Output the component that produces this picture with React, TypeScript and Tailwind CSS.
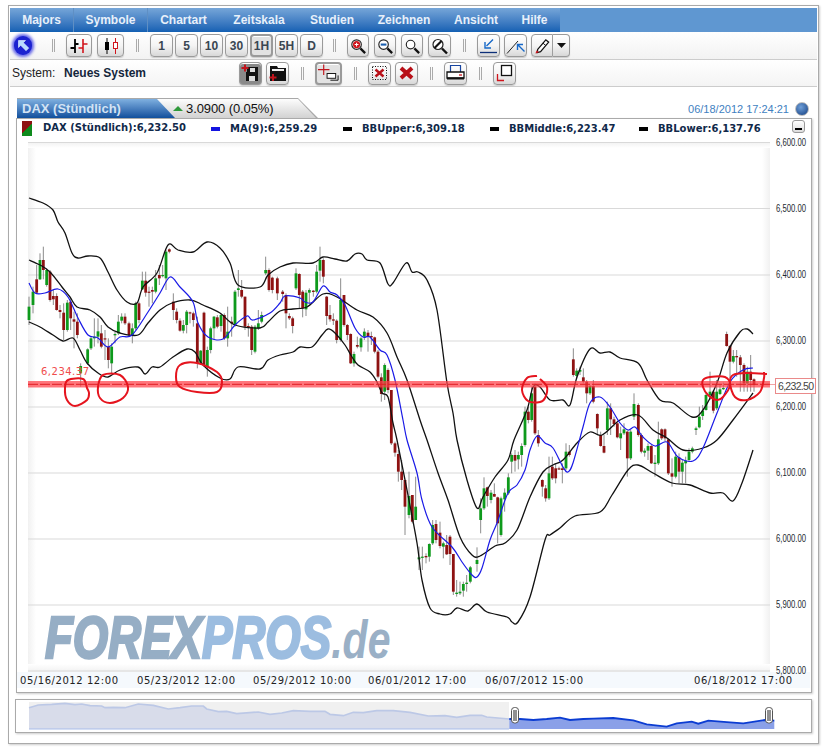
import type { ReactNode } from "react";

const G = 1;
const R = 0;
// [x, wickTop, wickBottom, bodyTop, bodyBottom, colour] measured on 3x crops
type Row = number[];

const section = (ox: number, oy: number, rows: Row[]) =>
  rows.map(([x, wt, wb, bt, bb, c]) => ({
    x: ox + x / 3,
    wt: oy + wt / 3,
    wb: oy + wb / 3,
    bt: oy + bt / 3,
    bb: oy + bb / 3,
    c,
  }));

const pts = (ox: number, oy: number, list: number[][]) => list.map(([x, y]) => [ox + x / 3, oy + y / 3]);

const candles = [
  ...section(20, 190, [
    [27, 320, 405, 350, 390, G], [39, 290, 370, 305, 345, G], [50, 225, 310, 268, 308, R], [60, 190, 270, 210, 268, G],
    [70, 170, 268, 210, 240, R], [80, 235, 290, 240, 285, G], [90, 240, 335, 245, 330, R], [100, 300, 345, 318, 328, R],
    [110, 310, 362, 318, 360, R], [120, 345, 385, 360, 366, R], [131, 340, 450, 368, 420, R], [142, 330, 425, 338, 420, G],
    [152, 325, 420, 335, 385, R], [162, 365, 475, 388, 395, R], [172, 370, 445, 395, 435, R], [182, 520, 590, 528, 550, G],
    [203, 475, 525, 478, 520, G], [213, 440, 480, 445, 475, G], [223, 385, 470, 440, 445, G], [234, 385, 460, 424, 440, G],
    [244, 405, 475, 430, 470, R], [255, 420, 510, 445, 448, R], [265, 445, 535, 470, 510, R], [275, 460, 550, 470, 520, G],
    [285, 425, 460, 432, 436, G], [295, 375, 435, 395, 430, G], [305, 370, 400, 380, 392, G], [315, 370, 405, 380, 400, R],
    [327, 395, 440, 400, 435, R], [337, 400, 460, 415, 435, G], [347, 335, 420, 340, 415, G], [357, 335, 400, 340, 390, R],
    [367, 245, 300, 272, 298, G], [377, 245, 320, 272, 308, R], [387, 290, 350, 305, 308, R], [397, 290, 340, 300, 305, R],
    [407, 240, 310, 265, 305, G], [418, 225, 285, 255, 265, R], [428, 225, 262, 255, 258, G], [438, 180, 300, 185, 265, G],
    [448, 175, 190, 178, 185, R], [460, 310, 390, 335, 360, R], [470, 355, 400, 365, 390, R], [480, 385, 425, 392, 422, R],
    [490, 390, 430, 405, 422, G], [500, 360, 430, 365, 405, G], [510, 365, 400, 367, 370, R], [520, 365, 410, 370, 390, R],
    [532, 380, 535, 400, 520, R], [542, 480, 525, 482, 520, G], [552, 365, 530, 368, 525, R], [562, 470, 560, 480, 530, G],
    [572, 410, 490, 415, 480, G], [582, 378, 450, 380, 415, G], [592, 375, 415, 382, 410, R], [603, 370, 425, 375, 408, G],
    [613, 370, 450, 375, 445, R], [623, 350, 470, 425, 445, G], [635, 380, 440, 395, 400, R], [645, 300, 410, 305, 405, G],
    [655, 240, 320, 295, 300, G], [665, 270, 325, 300, 320, R], [675, 320, 420, 320, 410, R], [685, 400, 440, 408, 412, R],
    [695, 405, 495, 410, 480, R], [705, 405, 490, 410, 485, G], [715, 360, 420, 400, 415, G], [725, 365, 400, 375, 395, G],
    [737, 200, 255, 240, 250, G], [747, 235, 305, 240, 300, R], [757, 260, 310, 263, 300, R], [772, 260, 330, 265, 310, R],
  ]),
  ...section(280, 230, [
    [8, 180, 215, 185, 192, R], [18, 190, 295, 195, 250, R], [28, 250, 270, 258, 265, R], [38, 260, 310, 265, 288, R],
    [48, 115, 180, 130, 175, G], [58, 130, 235, 132, 195, R], [68, 180, 262, 185, 235, R], [78, 180, 258, 188, 238, G],
    [88, 175, 220, 180, 188, G], [100, 180, 200, 182, 186, R], [110, 105, 190, 125, 185, G], [120, 50, 155, 90, 122, G],
    [130, 85, 160, 90, 140, R], [140, 198, 285, 200, 258, R], [150, 225, 275, 255, 268, R], [160, 250, 285, 268, 272, R],
    [170, 268, 340, 272, 330, R], [182, 145, 335, 210, 330, G], [192, 195, 290, 195, 285, R], [202, 282, 330, 285, 315, R],
    [212, 310, 402, 312, 400, R], [222, 365, 410, 372, 400, G], [232, 320, 355, 345, 350, R], [243, 320, 365, 325, 352, G],
    [253, 295, 330, 305, 320, G], [264, 300, 365, 308, 320, R], [274, 305, 345, 318, 322, R], [284, 320, 370, 322, 365, R],
    [294, 360, 445, 365, 440, R], [304, 430, 515, 442, 492, R], [314, 400, 510, 405, 485, G], [324, 415, 490, 420, 480, R],
    [334, 480, 645, 480, 640, R], [345, 635, 680, 640, 668, R],
    [735, 530, 650, 545, 645, G], [745, 530, 580, 545, 570, R], [755, 470, 575, 490, 570, G], [765, 460, 615, 470, 610, R], [775, 600, 650, 615, 640, R],
  ]),
  ...section(380, 440, [
    [55, 30, 125, 42, 95, R], [65, 60, 150, 95, 120, R], [75, 120, 285, 120, 200, R], [87, 95, 235, 168, 225, G],
    [97, 165, 250, 165, 245, R], [107, 110, 240, 200, 240, G], [117, 320, 390, 352, 358, G], [127, 320, 390, 350, 352, G],
    [138, 340, 370, 348, 352, R], [148, 310, 365, 312, 350, G], [158, 240, 315, 255, 310, G], [168, 240, 310, 252, 300, R],
    [180, 245, 325, 278, 318, R], [190, 305, 355, 310, 320, G], [200, 285, 345, 315, 343, R], [210, 285, 375, 290, 342, R],
    [220, 342, 465, 342, 455, R], [230, 420, 470, 458, 462, G], [240, 425, 465, 455, 460, G], [250, 425, 470, 432, 452, G],
    [260, 405, 455, 428, 432, G], [271, 378, 430, 382, 425, G], [291, 322, 395, 360, 372, G], [302, 175, 280, 205, 240, G],
    [312, 112, 210, 145, 205, G], [322, 140, 200, 142, 168, R], [333, 150, 190, 158, 180, G], [343, 130, 170, 162, 170, R],
    [353, 170, 310, 172, 250, R], [363, 170, 290, 175, 285, G], [374, 145, 215, 158, 178, G], [385, 100, 165, 112, 160, G],
    [395, 40, 100, 45, 65, G], [405, 30, 95, 45, 62, R], [415, 35, 88, 45, 58, G], [425, 10, 80, 18, 45, G],
  ]),
  ...section(540, 320, [
    [7, 478, 530, 480, 500, R], [17, 495, 545, 505, 535, R], [27, 410, 540, 460, 535, G], [37, 410, 480, 440, 475, R],
    [47, 430, 490, 445, 475, R], [57, 440, 450, 445, 447, R], [67, 430, 490, 445, 450, R], [78, 370, 450, 395, 445, G],
    [88, 375, 410, 395, 405, R], [100, 85, 170, 118, 165, R], [110, 145, 175, 152, 168, G], [120, 140, 165, 150, 155, G],
    [130, 145, 190, 172, 185, R], [140, 180, 250, 185, 220, R], [150, 195, 225, 198, 220, G], [160, 180, 250, 198, 245, R],
    [172, 280, 345, 282, 325, R], [182, 335, 380, 345, 378, R], [192, 345, 400, 378, 398, R], [202, 245, 345, 265, 330, G],
    [212, 250, 345, 265, 298, R], [222, 290, 320, 298, 312, R], [232, 308, 355, 310, 352, R], [242, 320, 390, 340, 355, G],
    [252, 310, 345, 328, 340, G], [262, 332, 470, 335, 415, R], [272, 330, 420, 335, 415, G], [282, 220, 300, 252, 290, G],
    [295, 250, 350, 255, 345, R], [304, 340, 400, 345, 395, R], [314, 385, 410, 392, 398, G], [324, 370, 420, 378, 392, G],
    [334, 375, 432, 378, 430, R], [345, 405, 470, 428, 432, G], [355, 305, 435, 358, 430, G], [365, 325, 360, 328, 355, R],
    [375, 325, 365, 328, 355, R], [385, 355, 465, 358, 460, R], [396, 415, 500, 460, 470, R], [407, 395, 475, 410, 470, G],
    [417, 400, 490, 412, 455, R], [427, 420, 490, 428, 455, G], [437, 410, 490, 422, 430, G], [447, 385, 425, 395, 420, G],
    [457, 380, 400, 385, 395, G], [468, 320, 345, 325, 330, G], [478, 260, 325, 290, 322, G], [488, 255, 300, 272, 288, G],
    [498, 220, 272, 225, 270, G], [510, 155, 240, 215, 225, G], [520, 210, 280, 215, 272, R], [530, 180, 270, 215, 265, G],
    [540, 195, 225, 208, 222, G], [550, 188, 210, 204, 206, G], [560, 35, 80, 42, 78, R], [570, 75, 175, 78, 125, R],
    [580, 90, 130, 108, 125, G], [590, 90, 170, 108, 112, R], [601, 105, 215, 112, 135, R], [612, 130, 215, 135, 190, R],
    [622, 140, 215, 155, 190, G], [632, 105, 215, 155, 180, R], [642, 175, 215, 178, 195, R],
  ]),
];

const upper = [
  [29, 198], [43, 203], [53, 210], [58, 222], [65, 233], [72, 253], [78, 258], [88, 256], [100, 258], [108, 272], [117, 290], [127, 302],
  [137, 303], [143, 287], [157, 273], [168, 245], [178, 250], [193, 252], [207, 242], [220, 248], [230, 263], [238, 285], [260, 287], [268, 275],
  [280, 267], [293, 263], [313, 263], [323, 257], [335, 259], [347, 261], [355, 254], [362, 254], [367, 260], [380, 263], [388, 284], [393, 283],
  [406, 263], [412, 272], [418, 272], [427, 280], [437, 310], [447, 383], [453, 413], [457, 440], [467, 480], [477, 508], [483, 497], [495, 477],
  [508, 460], [514, 440], [527, 410], [533, 387], [540, 387], [550, 400], [563, 400], [570, 405], [577, 377], [590, 349], [600, 353], [610, 352],
  [620, 358], [638, 363], [647, 380], [660, 400], [673, 403], [692, 417], [703, 410], [717, 383], [727, 353], [740, 332], [747, 329], [753, 334],
];
const middle = [
  [29, 260], [40, 265], [50, 272], [62, 287], [70, 297], [77, 307], [90, 310], [100, 317], [108, 327], [120, 333], [138, 335], [148, 323],
  [160, 310], [172, 303], [190, 300], [203, 305], [220, 313], [235, 325], [260, 328], [268, 322], [280, 311], [293, 309], [307, 307], [323, 294],
  [337, 297], [357, 310], [373, 317], [387, 333], [397, 357], [407, 380], [420, 420], [427, 440], [438, 473], [448, 500], [460, 537], [472, 555],
  [480, 556], [495, 546], [505, 543], [517, 530], [530, 497], [543, 472], [553, 465], [563, 460], [577, 443], [590, 432], [602, 435], [620, 420],
  [638, 415], [653, 430], [667, 438], [683, 450], [703, 448], [717, 440], [733, 420], [753, 393],
];
const lower = [
  [29, 322], [40, 327], [53, 335], [63, 341], [73, 338], [80, 350], [87, 363], [98, 373], [108, 377], [120, 370], [138, 367], [145, 374],
  [152, 367], [160, 367], [173, 357], [187, 349], [195, 352], [203, 365], [220, 378], [230, 379], [238, 367], [260, 369], [268, 360], [280, 355],
  [293, 352], [300, 347], [312, 347], [322, 335], [328, 329], [335, 333], [345, 345], [352, 357], [358, 365], [370, 372], [377, 382], [382, 393],
  [388, 397], [393, 423], [397, 440], [407, 490], [417, 543], [422, 580], [430, 608], [440, 614], [450, 614], [457, 608], [468, 611], [477, 604],
  [487, 612], [507, 617], [512, 622], [518, 622], [530, 597], [545, 540], [550, 535], [560, 528], [575, 516], [600, 512], [612, 495], [628, 470],
  [638, 465], [653, 473], [672, 483], [690, 485], [710, 493], [723, 493], [733, 501], [742, 483], [753, 450],
];
const ma = [
  [29, 283], [35, 293], [45, 293], [58, 289], [68, 297], [78, 318], [88, 335], [98, 338], [108, 347], [120, 337], [132, 335], [148, 312],
  [160, 293], [170, 277], [180, 287], [193, 302], [198, 323], [208, 337], [223, 339], [235, 325], [247, 316], [253, 320], [270, 313], [280, 303],
  [285, 296], [300, 298], [305, 302], [313, 302], [323, 286], [330, 292], [337, 295], [345, 305], [355, 328], [363, 337], [370, 337], [380, 350],
  [387, 355], [395, 380], [403, 420], [407, 440], [417, 473], [422, 500], [432, 527], [452, 547], [462, 562], [472, 575], [477, 577], [482, 568],
  [490, 540], [497, 523], [508, 493], [517, 485], [525, 470], [530, 450], [537, 436], [545, 443], [553, 448], [563, 467], [568, 472], [573, 463],
  [583, 427], [590, 403], [600, 397], [610, 407], [620, 423], [628, 430], [635, 427], [643, 437], [655, 446], [667, 442], [678, 457], [693, 461],
  [703, 448], [717, 413], [730, 382], [743, 370], [753, 368],
];

const circles = [
  { d: [[68, 380], [83, 379], [87, 388], [89, 393], [87, 400], [75, 406], [67, 400], [65, 388]], closed: true },
  { d: [[103, 375], [120, 375], [128, 387], [123, 398], [110, 403], [100, 398], [98, 387]], closed: true },
  { d: [[180, 365], [197, 363], [217, 372], [222, 382], [217, 392], [197, 392], [180, 387], [176, 377]], closed: true },
  { d: [[537, 376], [527, 378], [522, 390], [528, 401], [540, 402], [545, 398], [547, 387], [540, 379]], closed: false },
  { d: [[703, 380], [710, 377], [725, 377], [730, 385], [723, 397], [717, 400], [708, 395], [703, 387]], closed: true },
  { d: [[767, 374], [747, 373], [733, 375], [730, 383], [735, 397], [747, 400], [760, 392], [764, 378], [764, 372]], closed: false },
];

const sparkLeft = [
  ...pts(10, 670, [
    [57, 113], [85, 105], [125, 103], [165, 100], [195, 104], [215, 102], [240, 107], [275, 108], [285, 113], [310, 112], [345, 113], [385, 102],
    [430, 106], [475, 117], [510, 113], [545, 108], [580, 108], [590, 117], [625, 125], [650, 124], [680, 131], [745, 126], [780, 133], [815, 129],
    [850, 122], [900, 124], [945, 124], [960, 133], [1000, 137], [1030, 127], [1060, 128], [1100, 122], [1150, 122], [1200, 127],
  ]),
  ...pts(420, 670, [[25, 138], [75, 137], [110, 142], [150, 136], [185, 136], [200, 141], [268, 147]]),
];
const sparkRight = pts(420, 670, [
  [268, 147], [300, 147], [340, 150], [380, 147], [420, 143], [450, 150], [490, 147], [520, 146], [580, 144], [640, 151], [680, 163], [740, 170], [770, 160],
  [815, 155], [835, 161], [865, 152], [930, 157], [970, 160], [1035, 150], [1063, 152],
]);

function smooth(p: number[][], closed = false) {
  const at = (i: number) => (closed ? p[(i + p.length) % p.length] : p[Math.max(0, Math.min(p.length - 1, i))]);
  let d = `M${p[0][0]} ${p[0][1]}`;
  const n = closed ? p.length : p.length - 1;
  for (let i = 0; i < n; i++) {
    const [a, b, c, e] = [at(i - 1), at(i), at(i + 1), at(i + 2)];
    d += `C${(b[0] + (c[0] - a[0]) / 6).toFixed(1)} ${(b[1] + (c[1] - a[1]) / 6).toFixed(1)} ${(c[0] - (e[0] - b[0]) / 6).toFixed(1)} ${(c[1] - (e[1] - b[1]) / 6).toFixed(1)} ${c[0]} ${c[1]}`;
  }
  return d;
}

const line = (p: number[][]) => "M" + p.map(([x, y]) => `${x.toFixed(1)} ${y.toFixed(1)}`).join("L");
const area = (p: number[][], base: number) =>
  `${line(p)}L${p[p.length - 1][0].toFixed(1)} ${base}L${p[0][0].toFixed(1)} ${base}Z`;

const menus: [string, number][] = [
  ["Majors", 64], ["Symbole", 74], ["Chartart", 71], ["Zeitskala", 80], ["Studien", 66], ["Zeichnen", 78], ["Ansicht", 66], ["Hilfe", 51],
];
const grid = [
  [142.5, "6,600.00"], [208.5, "6,500.00"], [275, "6,400.00"], [341, "6,300.00"], [407, "6,200.00"], [473, "6,100.00"], [539, "6,000.00"], [605, "5,900.00"], [671, "5,800.00"],
] as [number, string][];
const dates: [number, string][] = [
  [20, "05/16/2012 12:00"], [137, "05/23/2012 12:00"], [253, "05/29/2012 10:00"], [368, "06/01/2012 17:00"], [485, "06/07/2012 15:00"], [694, "06/18/2012 17:00"],
];

const btnBase = "flex h-[23px] shrink-0 items-center justify-center rounded-[4px] border border-[#9a9a9a] shadow-[inset_0_1px_0_#fff,0_1px_1px_#ccc]";

function Btn({ w = "w-[23px]", pressed, dark, children }: { w?: string; pressed?: boolean; dark?: boolean; children: ReactNode }) {
  const look = dark
    ? "bg-[#8a8a8a]"
    : pressed
      ? "border-2 bg-[#e2e2e2]"
      : "bg-linear-to-b from-white via-[#f4f4f4] to-[#d8d8d8]";
  return <div className={`${btnBase} ${w} ${look} text-[12px] font-bold text-[#3a4652]`}>{children}</div>;
}

function Sep({ className }: { className: string }) {
  return <div className={`h-[13px] w-[3px] shrink-0 border-x border-[#aaa] ${className}`} />;
}

function Ico({ children }: { children: ReactNode }) {
  return (
    <svg width="21" height="20" viewBox="0 0 21 20" fill="none">
      {children}
    </svg>
  );
}

function Lens({ children, r = 5 }: { children?: ReactNode; r?: number }) {
  return (
    <Ico>
      <circle cx="9" cy="8.5" r={r} fill="#fff" stroke="#222" strokeWidth="1.2" />
      {children}
      <path d="M13 12.5L18 17.5" stroke="#111" strokeWidth="2.4" />
    </Ico>
  );
}

function Tip({ x, y }: { x: number; y: number }) {
  return <path d={`M${x - 3.5} ${y}h7M${x} ${y - 3.5}v7`} stroke="#c0141c" strokeWidth="2" />;
}

function Legend({ w, color, text }: { w: string; color: string; text: string }) {
  return (
    <div className={`flex items-center gap-[10px] ${w}`}>
      <div className={`h-[4px] w-[9px] ${color}`} />
      <span className="text-[10px] font-bold text-[#10294a] [font-family:'DejaVu_Sans',sans-serif]">{text}</span>
    </div>
  );
}

function Chart() {
  return (
    <svg width="794" height="554" viewBox="17 138 794 554" className="block overflow-visible" fontFamily="'Liberation Sans', Arial, sans-serif">
      <defs>
        <linearGradient id="edgeL" x1="0" x2="1" y1="0" y2="0">
          <stop offset="0" stopColor="#f1f1f1" />
          <stop offset="1" stopColor="#fff" />
        </linearGradient>
        <linearGradient id="edgeR" x1="1" x2="0" y1="0" y2="0">
          <stop offset="0" stopColor="#f1f1f1" />
          <stop offset="1" stopColor="#fff" />
        </linearGradient>
        <linearGradient id="edgeT" x1="0" x2="0" y1="0" y2="1">
          <stop offset="0" stopColor="#f1f1f1" />
          <stop offset="1" stopColor="#fff" />
        </linearGradient>
        <linearGradient id="edgeB" x1="0" x2="0" y1="1" y2="0">
          <stop offset="0" stopColor="#f1f1f1" />
          <stop offset="1" stopColor="#fff" />
        </linearGradient>
      </defs>

      <rect x="28" y="142" width="8" height="530" fill="url(#edgeL)" />
      <rect x="762" y="142" width="8" height="530" fill="url(#edgeR)" />
      <rect x="28" y="142" width="742" height="6" fill="url(#edgeT)" />
      <rect x="28" y="664" width="742" height="8" fill="url(#edgeB)" />
      <rect x="17" y="672" width="793" height="16" fill="#f5f9fd" />

      {grid.map(([y, label]) => (
        <g key={label}>
          <line x1="28" x2="770" y1={y} y2={y} stroke="#d9d9d9" />
          <text x="776" y={y + 3} fontSize="10" fill="#1c2a30" textLength="30" lengthAdjust="spacingAndGlyphs">
            {label}
          </text>
        </g>
      ))}

      <text transform="translate(45 658) scale(0.76 1)" fontSize="60" fontWeight="bold" fontStyle="italic" strokeWidth="2.6">
        <tspan fill="#96aec5" stroke="#96aec5">FOREX</tspan>
        <tspan fill="#9cbde0" stroke="#9cbde0">PROS</tspan>
        <tspan fill="#9ab0c6" fontSize="54" strokeWidth="0">.de</tspan>
      </text>

      {candles.map((k, i) => (
        <line key={i} x1={k.x} x2={k.x} y1={k.wt} y2={k.wb} stroke="#7f7f7f" strokeWidth="0.9" />
      ))}
      {candles.map((k, i) => (
        <rect key={i} x={k.x - 1.4} y={k.bt} width="2.8" height={Math.max(k.bb - k.bt, 1.2)} fill={k.c === G ? "#0e9a1c" : "#8e1212"} />
      ))}

      <path d={smooth(upper)} fill="none" stroke="#111" strokeWidth="1.3" />
      <path d={smooth(middle)} fill="none" stroke="#111" strokeWidth="1.3" />
      <path d={smooth(lower)} fill="none" stroke="#111" strokeWidth="1.3" />
      <path d={smooth(ma)} fill="none" stroke="#1a1ae6" strokeWidth="1.2" />

      <rect x="28" y="381" width="742" height="6.5" fill="#ff4048" opacity="0.72" />
      <line x1="28" x2="770" y1="384.3" y2="384.3" stroke="#e01e24" strokeDasharray="10 2" />
      <line x1="770" x2="775" y1="384.5" y2="384.5" stroke="#f3a3a3" />
      <text x="41" y="375" fontSize="10" fill="#f04c4c" fontFamily="'DejaVu Sans', sans-serif" textLength="48">
        6,234.37
      </text>

      {circles.map((c, i) => (
        <path key={i} d={smooth(c.d, c.closed)} fill="none" stroke="#e5141e" strokeWidth="2" />
      ))}

      <rect x="775.5" y="378.5" width="40" height="15" fill="#fff" stroke="#ea8a8a" />
      <text x="778" y="389.5" fontSize="10.5" fill="#444" textLength="36">
        6,232.50
      </text>

      {dates.map(([x, t]) => (
        <text key={t} x={x} y="684" fontSize="10" fill="#222" fontFamily="'DejaVu Sans', sans-serif" textLength="98">
          {t}
        </text>
      ))}
    </svg>
  );
}

function Navigator() {
  return (
    <svg width="795" height="32" viewBox="16 700 795 32" className="block">
      <rect x="29" y="702" width="480" height="27" fill="#f0f0f0" />
      <path d={area(sparkLeft, 729)} fill="#d8dcea" />
      <path d={line(sparkLeft)} fill="none" stroke="#bcc8e6" strokeWidth="1.7" />
      <line x1="29" x2="509" y1="729" y2="729" stroke="#a9bdea" />
      <path d={area(sparkRight, 729)} fill="#8aa0e8" />
      <path d={line(sparkRight)} fill="none" stroke="#0b3cd2" strokeWidth="1.8" />
      {[515, 769].map((x) => (
        <g key={x}>
          <rect x={x - 3.5} y="707.5" width="7" height="15.5" rx="3" fill="#fff" stroke="#555" />
          <path d={`M${x - 1} 710v11M${x + 1} 710v11`} stroke="#222" />
        </g>
      ))}
    </svg>
  );
}

export default function App() {
  return (
    <div className="h-[753px] bg-white pt-[5px] pl-[8px] [font-family:'Liberation_Sans',Arial,sans-serif]">
      <div className="h-[739px] w-[811px] border border-[#aaa] px-px pt-[2px] shadow-[1px_1px_2px_#ccc]">
        <div className="flex h-[24px] bg-[#5f97d1]">
          {menus.map(([name, w], i) => (
            <div
              key={name}
              className={`flex items-center justify-center bg-linear-to-b from-[#76a6d8] to-[#1360b3] text-[12px] font-bold text-[#e8f0fa] ${i < 2 ? "border-r border-[#5f8fc4]" : ""}`}
              style={{ width: w }}
            >
              {name}
            </div>
          ))}
        </div>

        <div className="flex h-[28px] items-center border-b border-[#ccc] bg-linear-to-b from-white to-[#f2f2f2] pl-[4px]">
          <div className="flex h-[19px] w-[18px] shrink-0 items-center justify-center rounded-full bg-[#1c22d0] shadow-[0_0_3px_2px_#6668e8]">
            <svg width="13" height="13" viewBox="0 0 13 13">
              <path d="M1.5 1.5h7l-2.2 2.2 5.4 5.4-2.6 2.6-5.4-5.4-2.2 2.2z" fill="#b7dcff" stroke="#eaf5ff" strokeWidth="0.6" />
            </svg>
          </div>
          <Sep className="ml-[20px]" />
          <div className="ml-[11px] flex gap-[5px]">
            <Btn w="w-[26px]">
              <svg width="22" height="18" viewBox="0 0 22 18" fill="none">
                <path d="M7 2v14M2.500 11h4.500M7 7h3.500M6 16v0" stroke="#000" strokeWidth="1.800" />
                <path d="M15 2v14M10.500 11H15M15 7h4.500" stroke="#d1141c" strokeWidth="1.600" />
              </svg>
            </Btn>
            <Btn w="w-[27px]">
              <svg width="22" height="18" viewBox="0 0 22 18" fill="none">
                <path d="M7 1v16" stroke="#000" />
                <rect x="5" y="5" width="4" height="8" fill="#000" />
                <path d="M15.500 1v16" stroke="#d1141c" />
                <rect x="13.500" y="5.500" width="4" height="6" fill="#fff" stroke="#d1141c" />
              </svg>
            </Btn>
          </div>
          <Sep className="ml-[12px]" />
          <div className="ml-[11px] flex gap-[2px]">
            <Btn>1</Btn>
            <Btn>5</Btn>
            <Btn>10</Btn>
            <Btn>30</Btn>
            <Btn pressed>1H</Btn>
            <Btn>5H</Btn>
            <Btn>D</Btn>
          </div>
          <Sep className="ml-[10px]" />
          <div className="ml-[11px] flex gap-[5px]">
            <Btn w="w-[22px]">
              <Lens>
                <circle cx="9" cy="8.500" r="3.800" fill="#d0141c" />
                <path d="M7 8.500h4M9 6.500v4" stroke="#fff" strokeWidth="1.100" />
              </Lens>
            </Btn>
            <Btn w="w-[22px]">
              <Lens>
                <path d="M6 8.500h6" stroke="#1a5fb0" strokeWidth="2.200" />
              </Lens>
            </Btn>
            <Btn w="w-[22px]">
              <Lens r={4.500} />
            </Btn>
            <Btn>
              <Lens>
                <path d="M5.500 12L12.500 5" stroke="#111" strokeWidth="2.200" />
              </Lens>
            </Btn>
          </div>
          <Sep className="ml-[12px]" />
          <div className="ml-[11px] flex gap-[4px]">
            <Btn>
              <Ico>
                <path d="M2 16.500h17" stroke="#0d2f78" strokeWidth="1.300" />
                <path d="M15 3.500L8.500 10M7 6v6h6" stroke="#1668c8" strokeWidth="1.400" />
              </Ico>
            </Btn>
            <Btn>
              <Ico>
                <path d="M2 17.500L13 5" stroke="#222" />
                <path d="M19.500 15.500L13 9M12.500 14V8.500h5.500" stroke="#1668c8" strokeWidth="1.400" />
              </Ico>
            </Btn>
            <div className="flex">
              <Btn w="w-[22px] rounded-r-none">
                <Ico>
                  <path d="M6 13.500L14.500 3.500l3 2.500L9 16l-3.500 1z" fill="#fff" stroke="#111" strokeWidth="1.300" />
                  <path d="M11.500 7l3 2.500" stroke="#111" />
                  <path d="M3.500 18l1.500-3.500 2.200 2z" fill="#d0141c" />
                </Ico>
              </Btn>
              <Btn w="w-[17px] rounded-l-none border-l-0">
                <svg width="9" height="5" viewBox="0 0 9 5">
                  <path d="M0 0h9L4.500 5z" fill="#111" />
                </svg>
              </Btn>
            </div>
          </div>
        </div>

        <div className="flex h-[27px] items-center border-b border-[#ccc] bg-linear-to-b from-white to-[#f4f4f4]">
          <div className="flex w-[229px] shrink-0 pl-[2px] text-[12px] text-[#222]">
            <span className="w-[52px]">System:</span>
            <span className="font-bold text-[#14263c]">Neues System</span>
          </div>
          <div className="flex gap-[4px]">
            <Btn dark>
              <Ico>
                <path d="M7 4h11v14H6V9H7z" fill="#111" />
                <rect x="9" y="13" width="6" height="5" fill="#ddd" />
                <rect x="10" y="5" width="5" height="4" fill="#ddd" />
                <Tip x={5} y={5} />
              </Ico>
            </Btn>
            <Btn>
              <Ico>
                <path d="M3 3h7l1 2h8v13H3z" fill="#111" />
                <path d="M5 6h12v2H5z" fill="#eee" />
                <Tip x={6} y={14.500} />
              </Ico>
            </Btn>
          </div>
          <Sep className="ml-[12px]" />
          <div className="ml-[11px]">
            <Btn w="w-[27px]" pressed>
              <svg width="24" height="20" viewBox="0 0 24 20" fill="none">
                <path d="M1 6.500h12M7 1v11" stroke="#c0141c" strokeWidth="1.200" />
                <rect x="10.500" y="10.500" width="9" height="5" fill="#fff" stroke="#111" />
                <path d="M14 17.500h8v-5" stroke="#111" />
              </svg>
            </Btn>
          </div>
          <Sep className="ml-[12px]" />
          <div className="ml-[11px] flex gap-[4px]">
            <Btn>
              <Ico>
                <rect x="3.500" y="3.500" width="14" height="13" stroke="#111" strokeDasharray="1 1.500" />
                <path d="M6.500 6.500l8 7M14.500 6.500l-8 7" stroke="#b81018" strokeWidth="2.400" />
              </Ico>
            </Btn>
            <Btn>
              <Ico>
                <path d="M5 5l11 10M16 5L5 15" stroke="#b81018" strokeWidth="4" />
              </Ico>
            </Btn>
          </div>
          <Sep className="ml-[12px]" />
          <div className="ml-[11px]">
            <Btn>
              <Ico>
                <path d="M5.500 9V2.500h10V9" stroke="#1644a0" strokeWidth="1.200" />
                <path d="M2 9h17v6H2z" fill="#fff" stroke="#111" strokeWidth="1.300" />
                <path d="M2 15.500h17" stroke="#111" strokeWidth="2" />
                <path d="M14 12h3" stroke="#d0141c" strokeWidth="1.300" />
              </Ico>
            </Btn>
          </div>
          <Sep className="ml-[12px]" />
          <div className="ml-[11px]">
            <Btn>
              <Ico>
                <rect x="7.500" y="2.500" width="10" height="10" fill="#fff" stroke="#111" strokeWidth="1.300" />
                <path d="M3.500 11v6.500H10" stroke="#d0141c" strokeWidth="1.300" />
              </Ico>
            </Btn>
          </div>
        </div>

        <div className="pl-[5px]">
          <div className="mt-[11px] ml-[2px] flex h-[20px] w-[795px] items-center justify-between">
            <div className="h-[20px] w-[301px] bg-[#a9a9a9] [clip-path:polygon(0_0,281px_0,301px_20px,0_20px)]">
              <div className="h-[20px] w-[300px] bg-linear-to-b from-white to-[#d2d2d2] pt-px [clip-path:polygon(0_1px,281px_1px,299px_20px,0_20px)]">
                <div className="flex h-[19px] items-center">
                  <div className="flex h-[19px] w-[158px] items-center bg-linear-to-b from-[#7fb0e0] to-[#0f4f9c] pl-[5px] text-[13px] font-bold text-[#d3e3f4] [clip-path:polygon(0_0,140px_0,158px_19px,0_19px)]">
                    DAX (Stündlich)
                  </div>
                  <div className="-ml-[2px] h-0 w-0 border-x-[5px] border-b-[5px] border-x-transparent border-b-[#2f9a3a]" />
                  <span className="ml-[3px] text-[13px] tracking-[-0.1px] text-[#111]">3.0900 (0.05%)</span>
                </div>
              </div>
            </div>
            <div className="flex items-center gap-[6px] pt-[2px] pr-[3px]">
              <span className="text-[11px] text-[#3f7fc1]">06/18/2012 17:24:21</span>
              <div className="size-[14px] rounded-full border border-[#bbb] bg-[radial-gradient(circle_at_40%_35%,#6f9fd8,#113d80)]" />
            </div>
          </div>

          <div className="ml-px h-[575px] w-[796px] border border-[#aaa] shadow-[1px_1px_2px_#ccc]">
            <div className="relative flex h-[19px] items-center pl-[5px]">
              <div className="flex w-[189px] items-center gap-[11px]">
                <div className="h-[15px] w-[10px] bg-[linear-gradient(135deg,#8e1212_50%,#0e8a1c_50%)]" />
                <span className="pb-[2px] text-[10px] font-bold text-[#10294a] [font-family:'DejaVu_Sans',sans-serif]">DAX (Stündlich):6,232.50</span>
              </div>
              <Legend w="w-[132px]" color="bg-[#1414e0]" text="MA(9):6,259.29" />
              <Legend w="w-[147px]" color="bg-black" text="BBUpper:6,309.18" />
              <Legend w="w-[149px]" color="bg-black" text="BBMiddle:6,223.47" />
              <Legend w="w-[130px]" color="bg-black" text="BBLower:6,137.76" />
              <div className="absolute top-[1px] right-[6px] flex size-[13px] items-end justify-center rounded-[3px] border border-[#999] bg-linear-to-b from-white to-[#ddd] pb-[2px]">
                <div className="h-[2px] w-[7px] bg-black" />
              </div>
            </div>
            <Chart />
          </div>

          <div className="mt-[6px] h-[34px] w-[797px] border border-[#aaa] shadow-[1px_1px_2px_#ccc]">
            <Navigator />
          </div>
        </div>
      </div>
    </div>
  );
}
